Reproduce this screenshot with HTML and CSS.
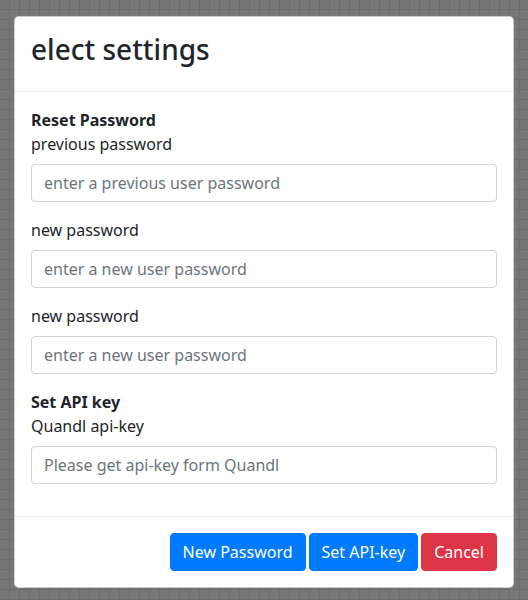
FILE: index.html
```html
<!DOCTYPE html>
<html lang="en">
<head>
<meta charset="utf-8">
<title>Settings</title>
<link rel="stylesheet" href="styles.css">
</head>
<body>
<div class="backdrop">
  <div class="modal">
    <div class="modal-header">
      <h3 class="modal-title">elect settings</h3>
    </div>
    <div class="modal-body">
      <div class="form-group">
        <div class="section-title">Reset Password</div>
        <label class="label">previous password</label>
        <input class="input" type="password" placeholder="enter a previous user password">
      </div>
      <div class="form-group">
        <label class="label">new password</label>
        <input class="input" type="password" placeholder="enter a new user password">
      </div>
      <div class="form-group">
        <label class="label">new password</label>
        <input class="input" type="password" placeholder="enter a new user password">
      </div>
      <div class="form-group">
        <div class="section-title">Set API key</div>
        <label class="label">Quandl api-key</label>
        <input class="input" type="text" placeholder="Please get api-key form Quandl">
      </div>
    </div>
    <div class="modal-footer">
      <button class="btn btn-primary">New Password</button>
      <button class="btn btn-primary">Set API-key</button>
      <button class="btn btn-danger">Cancel</button>
    </div>
  </div>
</div>
</body>
</html>
```

FILE: styles.css
```css
* { box-sizing: border-box; }

html, body {
  margin: 0;
  padding: 0;
}

body {
  width: 528px;
  height: 600px;
  overflow: hidden;
  font-family: "Noto Sans", sans-serif;
  font-size: 16px;
  line-height: 1.5;
  color: #212529;
  background-color: #777777;
  background-image:
    linear-gradient(90deg, transparent 9px, #6c6c6c 9px),
    linear-gradient(180deg, transparent 9px, #6c6c6c 9px);
  background-size: 10px 10px;
}

.backdrop {
  padding: 16px 14px 0 14px;
}

.modal {
  width: 500px;
  background: #fff;
  border: 1px solid rgba(0, 0, 0, 0.2);
  border-radius: 4.8px;
  display: flex;
  flex-direction: column;
}

.modal-header {
  padding: 16px;
  border-bottom: 1px solid #e9ecef;
}

.modal-title {
  margin: 0 0 8px 0;
  font-size: 28px;
  font-weight: 500;
  line-height: 1.2;
}

.modal-body {
  padding: 16px;
}

.form-group {
  margin-bottom: 16px;
  display: flex;
  flex-direction: column;
}

.section-title {
  font-weight: 700;
}

.label {
  display: block;
  margin-bottom: 8px;
}

.input {
  display: block;
  width: 100%;
  height: 38px;
  padding: 6px 12px;
  font-family: "Noto Sans", sans-serif;
  font-size: 16px;
  line-height: 1.5;
  color: #495057;
  background: #fff;
  border: 1px solid #ced4da;
  border-radius: 4px;
}

.input::placeholder {
  color: #6c757d;
  opacity: 1;
}

.modal-footer {
  display: flex;
  justify-content: flex-end;
  gap: 3px;
  padding: 16px;
  border-top: 1px solid #e9ecef;
}

.btn {
  height: 38px;
  padding: 6px 12px;
  font-family: "Noto Sans", sans-serif;
  font-size: 16px;
  line-height: 1.5;
  color: #fff;
  border: 1px solid transparent;
  border-radius: 4px;
}

.btn-primary {
  background: #007bff;
  border-color: #007bff;
}

.btn-danger {
  background: #dc3545;
  border-color: #dc3545;
}
```
